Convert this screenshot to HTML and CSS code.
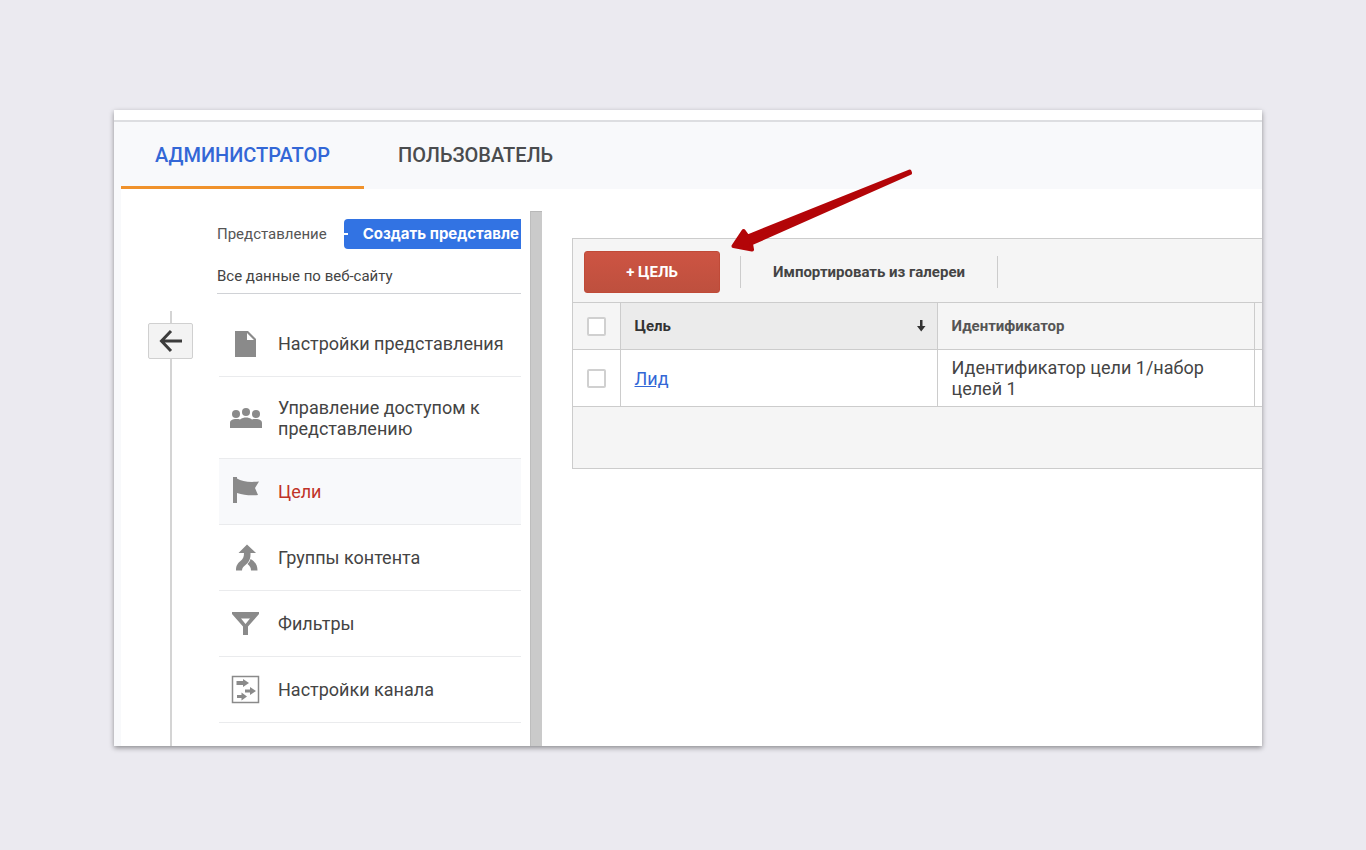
FILE: index.html
```html
<!DOCTYPE html>
<html lang="ru">
<head>
<meta charset="utf-8">
<meta name="viewport" content="width=device-width, initial-scale=1">
<title>Администратор — Цели</title>
<link rel="stylesheet" href="styles.css">
</head>
<body>
<div class="card">
  <nav class="tabs">
    <a class="tab tab-active" href="#">АДМИНИСТРАТОР</a>
    <a class="tab" href="#">ПОЛЬЗОВАТЕЛЬ</a>
  </nav>
  <div class="body">
    <div class="rail">
      <button class="back" type="button" aria-label="Назад">
        <svg width="24" height="24" viewBox="0 0 24 24" fill="none" stroke="#3c3c3c" stroke-width="3"><path d="M23 12H3M12 2L2.500 12 12 22"/></svg>
      </button>
    </div>
    <aside class="view">
      <div class="view-head">
        <span>Представление</span>
        <button class="create" type="button">Создать представле</button>
      </div>
      <div class="view-name">Все данные по веб-сайту</div>
      <ul class="menu">
        <li><a class="item" href="#">
          <svg class="icon" viewBox="0 0 34 34"><path fill="#8a8a8a" fill-rule="evenodd" d="M6 4h13l8 8v18H6zM18 6v7h7z"/></svg>
          <span>Настройки представления</span></a></li>
        <li><a class="item item-tall" href="#">
          <svg class="icon" viewBox="0 0 34 34" fill="#8a8a8a"><circle cx="7" cy="13" r="4"/><circle cx="17" cy="11" r="4"/><circle cx="27" cy="13" r="4"/><path d="M1 27v-5c0-3 3-4 6-4 2 0 3 0 4 .4 2-1.400 4-1.900 6-1.900s4 .5 6 1.900c1-.4 2-.4 4-.4 3 0 6 1 6 4v5z"/></svg>
          <span>Управление доступом к представлению</span></a></li>
        <li><a class="item item-active" href="#">
          <svg class="icon" viewBox="0 0 34 34" fill="#8a8a8a"><path d="M4 2h4v26H4z"/><path d="M8 3.500c5 3 12 4 22 3l-4 6.500 3 7c-6 .5-14 .5-21-2z"/></svg>
          <span>Цели</span></a></li>
        <li><a class="item" href="#">
          <svg class="icon" viewBox="0 0 34 34" fill="#8a8a8a"><path d="M18 3.500l9 8.500h-5.500c.3 6-1.500 9-4.500 11.500C14.500 25.500 13 27 13 29.500H7c0-4.500 1-6.500 4.500-9.500 2.500-2 3.500-4 3.500-8H9.500z"/><path d="M21.500 18c4.500 2.500 7 6 7 11.500h-6.500c0-3-1-4.500-3.500-6.500 1.500-1.500 2.500-3 3-5z"/></svg>
          <span>Группы контента</span></a></li>
        <li><a class="item" href="#">
          <svg class="icon" viewBox="0 0 34 34"><path fill="#8a8a8a" fill-rule="evenodd" d="M3 5h27v2L19 19.500V28h-5v-8.500L3 7zM12 11.500l4.500 5.500 4.500-5.500z"/></svg>
          <span>Фильтры</span></a></li>
        <li><a class="item" href="#">
          <svg class="icon" viewBox="0 0 34 34" fill="#8a8a8a"><path fill="none" stroke="#8a8a8a" stroke-width="1.500" d="M3.500 3.500h26v26h-26z"/><path d="M7.500 8h6.500V6l6 4-6 4v-2H7.500zM16 16.500h5V14l6 4-6 4v-2.500h-5zM8 22h4.500v-2.500l5.500 4-5.500 4V25H8z"/></svg>
          <span>Настройки канала</span></a></li>
      </ul>
    </aside>
    <div class="divider"></div>
    <main class="main">
      <div class="toolbar">
        <button class="add" type="button">+ ЦЕЛЬ</button>
        <button class="import" type="button">Импортировать из галереи</button>
      </div>
      <table class="goals">
        <colgroup><col class="col-check"><col><col><col class="col-more"></colgroup>
        <thead>
          <tr>
            <th><input class="check" type="checkbox" aria-label="Выбрать все"></th>
            <th class="sorted"><div class="sort">Цель
              <svg width="10" height="12" viewBox="0 0 10 12"><path fill="#333" d="M4 0h2.500v6H9.500L5.200 11.500 1 6h3z"/></svg></div></th>
            <th class="muted">Идентификатор</th>
            <th></th>
          </tr>
        </thead>
        <tbody>
          <tr>
            <td><input class="check" type="checkbox" aria-label="Выбрать цель Лид"></td>
            <td><a class="link" href="#">Лид</a></td>
            <td>Идентификатор цели 1/набор целей 1</td>
            <td></td>
          </tr>
        </tbody>
      </table>
      <div class="foot"></div>
      <svg class="pointer" width="184" height="88" viewBox="730 168 184 88"><path fill="#b30508" stroke="#b30508" stroke-width="4" stroke-linejoin="round" d="M733.500 246L743.500 231 747.500 236.500 909.500 171.500 910 173 751 243.500 752 249.500z"/></svg>
    </main>
  </div>
</div>
</body>
</html>
```
FILE: styles.css
```css
* { box-sizing: border-box; }

body {
  margin: 0;
  min-height: 100vh;
  padding: 110px 104px 104px 114px;
  display: flex;
  background: #ebeaf0;
  font-family: Roboto, "Liberation Sans", sans-serif;
  font-size: 18px;
  color: #444;
}

button { font-family: inherit; cursor: pointer; }
a { color: inherit; text-decoration: none; }

.card {
  flex: 1;
  min-width: 0;
  display: flex;
  flex-direction: column;
  padding-top: 10px;
  background: #fff;
  box-shadow: 0 2px 5px rgba(0, 0, 0, 0.4);
  overflow: hidden;
}

.tabs {
  display: flex;
  height: 69px;
  padding-left: 7px;
  border-top: 2px solid #dddee1;
  background: #f8f9fb;
}

.tab {
  display: flex;
  align-items: center;
  padding: 2px 34px 0;
  border-bottom: 3px solid transparent;
  font-size: 20px;
  font-weight: 500;
  color: #4a4c4e;
}

.tab-active { color: #3367d6; border-color: #f0922b; }

.body {
  flex: 1;
  display: flex;
  padding-top: 22px;
  border-left: 7px solid #f8f9fb;
}

.rail {
  width: 45px;
  margin: 100px 24px 0 27px;
  padding-top: 12px;
  background: linear-gradient(#d4d4d4, #d4d4d4) center / 2px 100% no-repeat;
}

.back {
  display: grid;
  place-items: center;
  width: 45px;
  height: 36px;
  padding: 0;
  border: 1px solid #d0d0d0;
  border-radius: 2px;
  background: #f3f3f3;
}

.view { width: 304px; padding-top: 8px; }

.view-head {
  display: flex;
  align-items: center;
  gap: 17px;
  font-size: 15px;
  color: #555;
}

.create {
  position: relative;
  flex: 1;
  height: 30px;
  padding: 0 0 2px 19px;
  border: 0;
  border-radius: 4px 0 0 4px;
  background: #3273e3;
  color: #fff;
  font-family: Inter, Roboto, sans-serif;
  font-size: 15px;
  font-weight: 700;
  text-align: left;
  white-space: nowrap;
}

.create::before {
  content: "";
  position: absolute;
  left: 0;
  top: 14px;
  width: 4px;
  height: 2px;
  background: #fff;
}

.view-name {
  padding: 17px 0 7px;
  border-bottom: 1px solid #d0d2d6;
  font-size: 15px;
  line-height: 20px;
}

.menu {
  margin: 17px 0 0 2px;
  padding: 0;
  list-style: none;
}

.item {
  display: flex;
  align-items: center;
  gap: 15px;
  height: 66px;
  padding-left: 10px;
  border-bottom: 1px solid #eaebed;
  line-height: 21px;
}

.item-tall { height: 82px; }
.item-active { background: #f8f9fb; color: #c03328; }
.icon { flex: none; width: 34px; height: 34px; }

.divider {
  width: 12px;
  margin: 0 30px 0 9px;
  background: #cacaca;
  border-top: 1px solid #b8b8b8;
  border-left: 1px solid #bdbdbd;
}

.main {
  position: relative;
  flex: 1;
  min-width: 0;
  align-self: flex-start;
  margin-top: 27px;
  border: 1px solid #ccc;
  border-right: 0;
  background: #f5f5f5;
}

.toolbar {
  display: flex;
  align-items: center;
  gap: 20px;
  height: 63px;
  padding: 2px 0 0 11px;
}

.add {
  width: 136px;
  height: 42px;
  border: 1px solid #c04a38;
  border-radius: 3px;
  background: linear-gradient(#cd5443, #be503e);
  color: #fff;
  font-size: 15px;
  font-weight: 700;
}

.import {
  height: 32px;
  padding: 0 32px;
  border: 1px solid #ccc;
  border-width: 0 1px;
  background: none;
  color: #444;
  font-size: 15px;
  font-weight: 700;
}

.goals {
  width: 100%;
  table-layout: fixed;
  border-collapse: collapse;
  line-height: 21px;
}

.col-check { width: 47px; }
.col-more { width: 8px; }

.goals th,
.goals td {
  padding: 0 14px;
  border: 1px solid #ccc;
  border-left-width: 0;
  text-align: left;
}

.goals th:last-child,
.goals td:last-child { padding: 0; border-right: 0; }

.goals th { height: 47px; font-size: 15px; color: #333; }
.goals td { height: 57px; background: #fff; }
.goals .muted { color: #555; }
.goals .sorted { padding-right: 11px; background: #ebebeb; }
.sort { display: flex; align-items: center; justify-content: space-between; }

.check {
  appearance: none;
  display: block;
  width: 19px;
  height: 19px;
  margin: 0;
  border: 2px solid #d0d0d0;
  border-radius: 2px;
  background: #fff;
}

.link { color: #3367d6; text-decoration: underline; }

.foot { height: 61px; }

.pointer {
  position: absolute;
  left: 157px;
  top: -71px;
  pointer-events: none;
}
```
